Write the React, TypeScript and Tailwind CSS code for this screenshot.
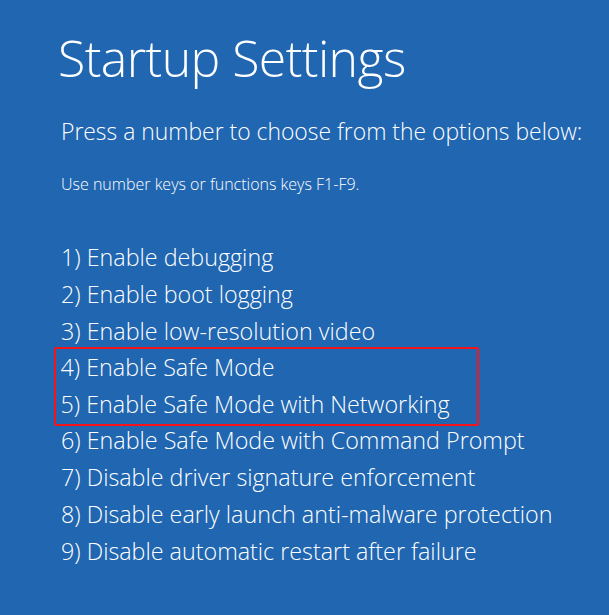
const options = [
  '1) Enable debugging',
  '2) Enable boot logging',
  '3) Enable low-resolution video',
  '4) Enable Safe Mode',
  '5) Enable Safe Mode with Networking',
  '6) Enable Safe Mode with Command Prompt',
  '7) Disable driver signature enforcement',
  '8) Disable early launch anti-malware protection',
  '9) Disable automatic restart after failure',
];

export default function App() {
  const font = { fontFamily: '"Open Sans", "Noto Sans", sans-serif' };
  return (
    <div
      className="w-[609px] h-[615px] bg-[#2066b1] text-white font-light overflow-hidden pl-[61px]"
      style={font}
    >
      <h1 className="text-[50px] leading-none pt-[33px] -ml-[3px] tracking-[-0.6px]">Startup Settings</h1>
      <p className="text-[22.9px] leading-none mt-[38px]">Press a number to choose from the options below:</p>
      <p className="text-[16px] leading-none mt-[32px]">Use number keys or functions keys F1-F9.</p>

      <div className="mt-[47px] flex flex-col text-[23.3px] leading-[36.9px]">
        {options.slice(0, 3).map((o) => (
          <div key={o}>{o}</div>
        ))}
        <div className="-ml-[7px] w-[425px] border-[2.5px] border-[#f5141a] rounded-[2px] pl-[4.5px] -mt-[2.5px] pb-[1px] -mb-[3.5px]">
          {options.slice(3, 5).map((o) => (
            <div key={o}>{o}</div>
          ))}
        </div>
        {options.slice(5).map((o) => (
          <div key={o}>{o}</div>
        ))}
      </div>
    </div>
  );
}
